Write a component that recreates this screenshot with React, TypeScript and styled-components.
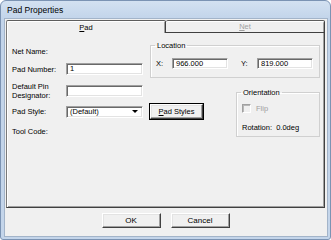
import styled, { createGlobalStyle } from 'styled-components';

const GlobalStyle = createGlobalStyle`
  html, body {
    margin: 0;
    padding: 0;
    background: #ffffff;
  }
  body {
    font-family: "Liberation Sans", Arial, sans-serif;
    font-size: 7.5px;
    color: #000000;
  }
  * {
    box-sizing: border-box;
  }
`;

function App() {
  return (
    <>
      <GlobalStyle />
      <Window>
        <TitleBar>Pad Properties</TitleBar>
        <Client>
          <TabControl>
            <TabStrip>
              <Tab $active>
                <u>P</u>ad
              </Tab>
              <Tab $disabled>
                <u>N</u>et
              </Tab>
            </TabStrip>
            <Panel>
              <Label $row={1}>Net Name:</Label>

              <Label $row={2}>Pad Number:</Label>
              <Field $row={2}>
                <TextBox>1</TextBox>
              </Field>

              <Label $row={3}>
                Default Pin
                <br />
                Designator:
              </Label>
              <Field $row={3}>
                <TextBox />
              </Field>

              <Label $row={4}>Pad Style:</Label>
              <Field $row={4}>
                <ComboBox>
                  <span>(Default)</span>
                  <DropArrow />
                </ComboBox>
              </Field>
              <PadStylesButton>
                <u>P</u>ad Styles
              </PadStylesButton>

              <Label $row={5}>Tool Code:</Label>

              <LocationGroup>
                <legend>Location</legend>
                <CoordRow>
                  <CoordLabel>X:</CoordLabel>
                  <CoordBox>966.000</CoordBox>
                  <CoordLabel $gap>Y:</CoordLabel>
                  <CoordBox>819.000</CoordBox>
                </CoordRow>
              </LocationGroup>

              <OrientationGroup>
                <legend>Orientation</legend>
                <FlipRow>
                  <CheckBox />
                  <span>Flip</span>
                </FlipRow>
                <Rotation>Rotation:&nbsp; 0.0deg</Rotation>
              </OrientationGroup>
            </Panel>
          </TabControl>
          <ButtonRow>
            <DialogButton>OK</DialogButton>
            <DialogButton>Cancel</DialogButton>
          </ButtonRow>
        </Client>
      </Window>
    </>
  );
}

export default App;

const Window = styled.div`
  width: 331px;
  height: 240px;
  display: flex;
  flex-direction: column;
  padding: 0 2px 2px 3px;
  border: 1px solid #7b93b3;
  border-radius: 6px 6px 3px 3px;
  background: linear-gradient(to bottom, #d3e1f1 0px, #c2d4ea 18px, #c4d5ea 100%);
`;

const TitleBar = styled.div`
  height: 17px;
  display: flex;
  align-items: center;
  padding: 1px 0 0 3px;
  font-size: 8.5px;
  color: #000000;
`;

const Client = styled.div`
  flex: 1;
  display: flex;
  flex-direction: column;
  border: 1px solid #a3b4c9;
  background: #f0f0f0;
  padding: 1px 2px 0 1px;
`;

const TabControl = styled.div`
  display: flex;
  flex-direction: column;
`;

const TabStrip = styled.div`
  display: flex;
  height: 13px;
`;

const Tab = styled.div<{ $active?: boolean; $disabled?: boolean }>`
  flex: 1;
  display: flex;
  align-items: center;
  justify-content: center;
  font-size: 7.5px;
  color: ${(p) => (p.$disabled ? '#a0a0a0' : '#000000')};
  border-top: 1px solid #5e5e5e;
  border-left: 1px solid ${(p) => (p.$active ? '#7a7a7a' : '#404040')};
  border-right: 1px solid #404040;
  border-bottom: ${(p) => (p.$active ? 'none' : '1px solid #404040')};
  box-shadow: ${(p) =>
    p.$active
      ? 'inset 1px 1px 0 #ffffff, inset -1px 0 0 #a0a0a0'
      : 'inset 0 1px 0 #ffffff, inset -1px 0 0 #a0a0a0'};
  border-radius: 2px 2px 0 0;

  & + & {
    border-left: none;
  }
`;

const Panel = styled.div`
  height: 175px;
  display: grid;
  grid-template-columns: 54px 84px 86px 84px;
  grid-template-rows: 17px 22px 21px 21px 18px;
  align-content: start;
  padding: 8px 3px 0 5px;
  border-left: 1px solid #7a7a7a;
  border-right: 1px solid #404040;
  border-bottom: 1px solid #404040;
  box-shadow: inset 1px 0 0 #ffffff, inset -1px 0 0 #a0a0a0,
    inset 0 -1px 0 #a0a0a0;
`;

const Label = styled.div<{ $row: number }>`
  grid-column: 1;
  grid-row: ${(p) => p.$row};
  align-self: center;
  line-height: 9px;
  padding-top: ${(p) => (p.$row === 1 ? 3 : 0)}px;
  white-space: nowrap;
`;

const Field = styled.div<{ $row: number }>`
  grid-column: 2;
  grid-row: ${(p) => p.$row};
  align-self: center;
`;

const sunken = `
  background: #ffffff;
  border-style: solid;
  border-width: 1px;
  border-color: #a0a0a0 #ffffff #ffffff #a0a0a0;
  box-shadow: inset 1px 1px 0 #696969, inset -1px -1px 0 #e3e3e3;
`;

const TextBox = styled.div`
  ${sunken};
  width: 77px;
  height: 12px;
  padding: 0 3px;
  line-height: 10px;
`;

const ComboBox = styled.div`
  ${sunken};
  width: 77px;
  height: 12px;
  display: flex;
  align-items: center;
  justify-content: space-between;
  padding: 0 2px 0 3px;
`;

const DropArrow = styled.span`
  width: 0;
  height: 0;
  margin-right: 2px;
  border-left: 3px solid transparent;
  border-right: 3px solid transparent;
  border-top: 3px solid #000000;
`;

const raised = `
  background: #f0f0f0;
  border-style: solid;
  border-width: 1px;
  border-color: #ffffff #404040 #404040 #ffffff;
  box-shadow: inset -1px -1px 0 #a0a0a0, inset 1px 1px 0 #e3e3e3;
  font-family: "Liberation Sans", Arial, sans-serif;
  color: #000000;
  padding: 0;
`;

const PadStylesButton = styled.button`
  ${raised};
  grid-column: 3;
  grid-row: 4;
  align-self: center;
  justify-self: start;
  width: 53px;
  height: 15px;
  font-size: 7.5px;
  outline: 1px solid #000000;
  outline-offset: 0;
`;

const Group = styled.fieldset`
  margin: 0;
  padding: 0 4px;
  border: 1px solid #d0d0d0;
  box-shadow: inset 1px 1px 0 #ffffff;
  min-width: 0;

  legend {
    padding: 0 2px;
    line-height: 9px;
    font-size: 7.5px;
  }
`;

const LocationGroup = styled(Group)`
  grid-column: 3 / 5;
  grid-row: 1 / 3;
  margin-bottom: 2px;
`;

const CoordRow = styled.div`
  display: flex;
  align-items: center;
  height: 13px;
  margin-top: 7px;
`;

const CoordLabel = styled.span<{ $gap?: boolean }>`
  width: 17px;
  margin-left: ${(p) => (p.$gap ? 12 : 0)}px;
  padding-left: 1px;
`;

const CoordBox = styled.div`
  ${sunken};
  width: 56px;
  height: 11px;
  padding: 0 3px;
  line-height: 9px;
`;

const OrientationGroup = styled(Group)`
  grid-column: 4;
  grid-row: 3 / 6;
  margin: 8px 0 3px 0;
`;

const FlipRow = styled.div`
  display: flex;
  align-items: center;
  gap: 5px;
  height: 10px;
  margin-top: 6px;
  padding-left: 1px;
  color: #a0a0a0;
`;

const CheckBox = styled.span`
  width: 9px;
  height: 9px;
  border-style: solid;
  border-width: 1px;
  border-color: #a0a0a0 #ffffff #ffffff #a0a0a0;
  box-shadow: inset 1px 1px 0 #b8b8b8;
  background: #f0f0f0;
`;

const Rotation = styled.div`
  margin-top: 10px;
  padding-left: 1px;
  line-height: 9px;
  white-space: nowrap;
`;

const ButtonRow = styled.div`
  flex: 1;
  display: flex;
  justify-content: center;
  align-items: flex-start;
  gap: 10px;
  padding-top: 5px;
`;

const DialogButton = styled.button`
  ${raised};
  width: 59px;
  height: 15px;
  font-size: 8px;
`;
